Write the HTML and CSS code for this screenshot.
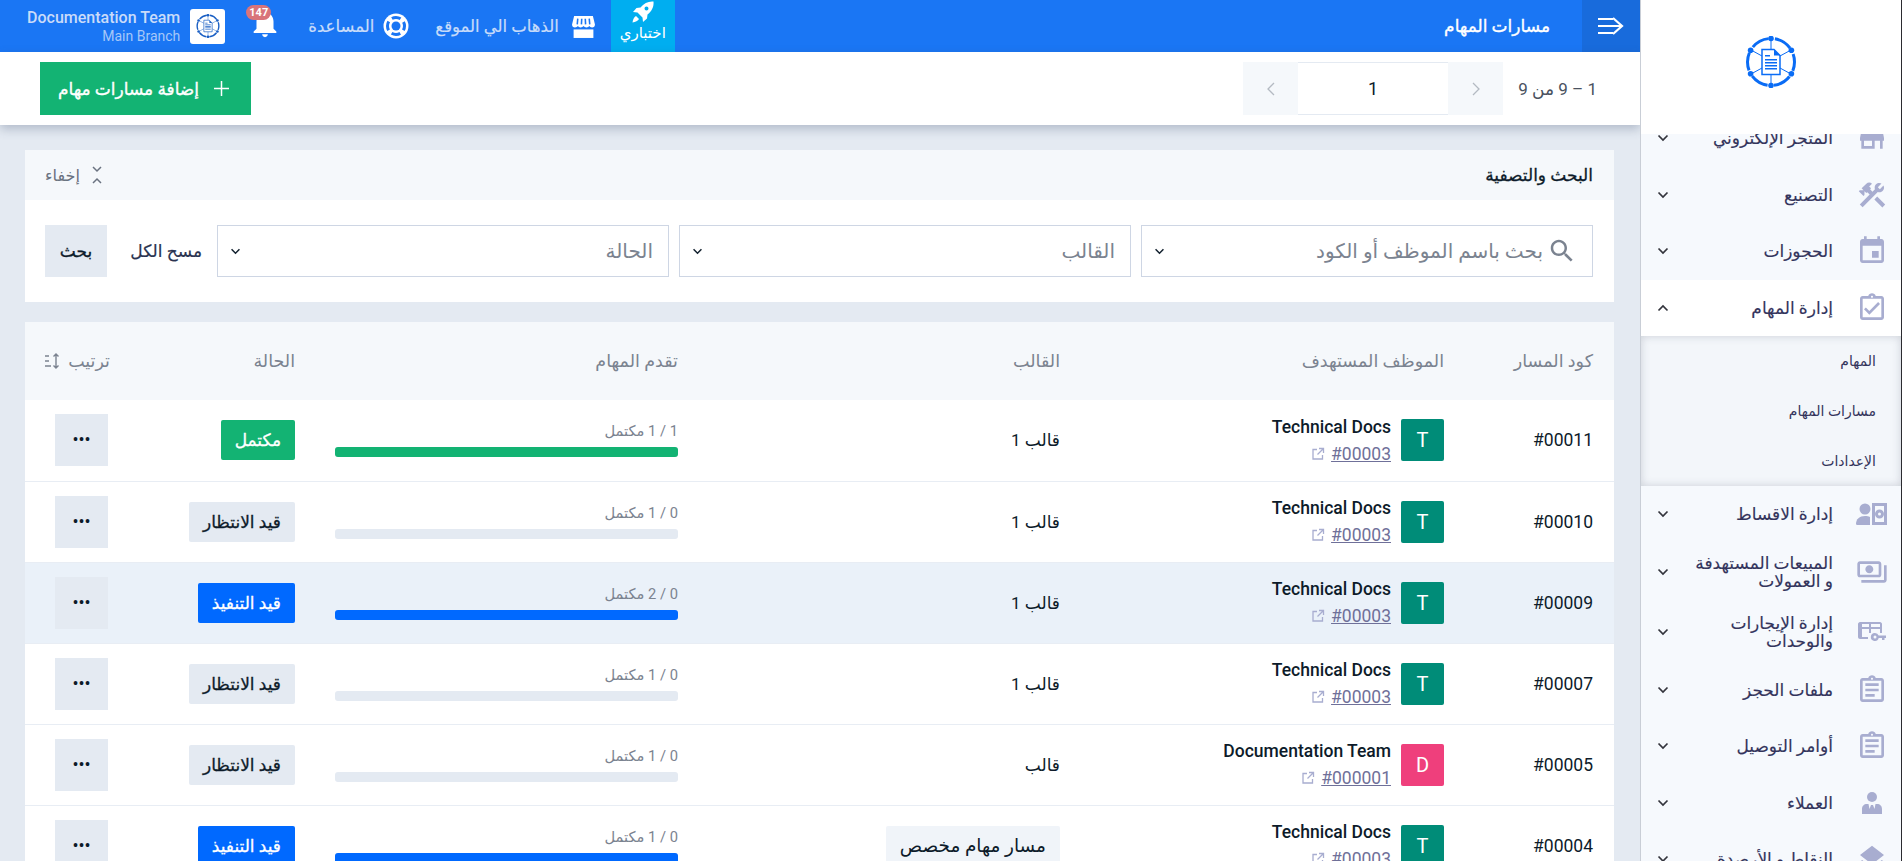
FILE: index.html
```html
<!doctype html>
<html lang="ar" dir="rtl">
	<head>
		<meta charset="UTF-8">
		<title>مسارات المهام</title>
		<link rel="stylesheet" href="styles.css">
	</head>
	<body>
		<svg class="sprite" xmlns="http://www.w3.org/2000/svg">
			<symbol id="i-logo" viewBox="0 0 52 52">
				<circle cx="26" cy="26" r="23.5" fill="none" stroke="currentColor" stroke-width="3" stroke-dasharray="18 6.61" stroke-dashoffset="9"/>
				<path d="M26 3v10M6 14l11 6M46 14l-11 6M6 38l11-6M46 38l-11-6M26 49V39" stroke="currentColor" stroke-width="1"/>
				<circle cx="26" cy="2.5" r="2.8"/><circle cx="26" cy="49.5" r="2.8"/>
				<circle cx="5.6" cy="14.2" r="2.8"/><circle cx="46.4" cy="14.2" r="2.8"/>
				<circle cx="5.6" cy="37.800" r="2.8"/><circle cx="46.4" cy="37.800" r="2.8"/>
				<path d="M17 13.500h12l6 6v19H17z" fill="#fff" stroke="currentColor" stroke-width="1.5"/>
				<path d="M29 13.500v6h6z"/>
				<path d="M20 19h5v1.400h-5zM20 23h12v1.400H20zM20 26h12v1.400H20zM20 29h12v1.400H20zM20 32h12v1.400H20z"/>
			</symbol>
			<symbol id="i-chev" viewBox="0 0 12 8"><path d="M1.500 1.500 6 6l4.500-4.500" fill="none" stroke="currentColor" stroke-width="1.700"/></symbol>
			<symbol id="i-store" viewBox="0 0 24 24"><path d="M20 4H4v2h16V4zm1 10v-2l-1-5H4l-1 5v2h1v6h10v-6h4v6h2v-6h1zm-9 4H6v-4h6v4z"/></symbol>
			<symbol id="i-shop" viewBox="0 0 24 24">
				<path d="M3 2h18l2 8c0 1.500-1 3-2.800 3-1.300 0-2-.6-2.600-1.400-.6.8-1.600 1.400-2.800 1.400s-2.200-.6-2.800-1.400c-.6.8-1.600 1.400-2.800 1.400s-2-.6-2.600-1.400C6 12.400 5.100 13 3.800 13 2 13 1 11.500 1 10z"/>
				<path d="M2.500 14.800h19V23h-19z"/>
				<path d="M6.500 4.500 6 10M10.300 4.500 10 10M13.700 4.500 14 10M17.500 4.500 18 10" stroke="#1a76f4" stroke-width="1.500" fill="none"/>
			</symbol>
			<symbol id="i-tools" viewBox="0 0 24 24"><path d="M13.780 15.300l6 6 2.110-2.160-6-6zM17.500 10c1.930 0 3.500-1.570 3.500-3.500 0-.58-.16-1.120-.41-1.600l-2.700 2.700-1.490-1.490 2.700-2.700c-.48-.25-1.020-.41-1.600-.41C15.570 3 14 4.570 14 6.500c0 .41.08.8.21 1.160l-1.850 1.850-1.780-1.780.71-.71-1.410-1.410L12 3.490c-1.170-1.170-3.070-1.170-4.240 0L4.220 7.030l1.410 1.410H2.810l-.71.71 3.540 3.540.71-.71V9.150l1.410 1.410.71-.71 1.780 1.780-7.410 7.410 2.120 2.120L16.340 9.790c.36.13.75.21 1.160.21z"/></symbol>
			<symbol id="i-event" viewBox="0 0 24 24"><path d="M17 12h-5v5h5v-5zM16 1v2H8V1H6v2H5c-1.110 0-1.990.9-1.990 2L3 19c0 1.100.89 2 2 2h14c1.100 0 2-.9 2-2V5c0-1.100-.9-2-2-2h-1V1h-2zm3 18H5V8h14v11z"/></symbol>
			<symbol id="i-task" viewBox="0 0 24 24"><path d="M18 9l-1.410-1.420L10 14.170l-2.590-2.580L6 13l4 4zm1-6h-4.180C14.400 1.840 13.300 1 12 1c-1.300 0-2.400.84-2.820 2H5c-1.100 0-2 .9-2 2v14c0 1.100.9 2 2 2h14c1.100 0 2-.9 2-2V5c0-1.100-.9-2-2-2zm-7-.25c.41 0 .75.34.75.75s-.34.75-.75.75-.75-.34-.75-.75.34-.75.75-.75zM19 19H5V5h14v14z"/></symbol>
			<symbol id="i-clip" viewBox="0 0 24 24"><path d="M7 15h7v2H7zm0-4h10v2H7zm0-4h10v2H7zm12-4h-4.180C14.400 1.840 13.300 1 12 1c-1.300 0-2.400.84-2.820 2H5c-1.100 0-2 .9-2 2v14c0 1.100.9 2 2 2h14c1.100 0 2-.9 2-2V5c0-1.100-.9-2-2-2zm-7-.25c.41 0 .75.34.75.75s-.34.75-.75.75-.75-.34-.75-.75.34-.75.75-.75zM19 19H5V5h14v14z"/></symbol>
			<symbol id="i-install" viewBox="0 -4 32 32"><circle cx="9" cy="7" r="5.500"/><path d="M0 22c0-5 3.500-8 9-8 2 0 3.500.4 5 1v8H2c-1.200 0-2-.4-2-1z"/><path fill-rule="evenodd" d="M16 1h15v22H16zm3 3v16h9V4zm4.500 3.500a4.500 4.500 0 1 1 0 9 4.500 4.500 0 0 1 0-9zm0 3a1.500 1.500 0 1 0 0 3 1.500 1.500 0 0 0 0-3z"/></symbol>
			<symbol id="i-money" viewBox="0 0 24 24"><path d="M19 14V6c0-1.100-.9-2-2-2H3c-1.100 0-2 .9-2 2v8c0 1.100.9 2 2 2h14c1.100 0 2-.9 2-2zm-2 0H3V6h14v8zm-7-7c-1.660 0-3 1.340-3 3s1.340 3 3 3 3-1.340 3-3-1.340-3-3-3zm13 0v11c0 1.100-.9 2-2 2H4v-2h17V7h2z"/></symbol>
			<symbol id="i-rent" viewBox="-2 -4 32 32"><path fill-rule="evenodd" d="M2 2h20c1 0 2 1 2 2v9h-2V9H13v4h-2V9H4v8h6v2H2c-1 0-2-1-2-2V4c0-1 1-2 2-2zm2 2v3h7V4zm9 0v3h9V4z"/><path fill-rule="evenodd" d="M17 13a4 4 0 0 1 3.700 2.500H28V18h-1.500v2H24v-2h-3.300A4 4 0 1 1 17 13zm0 2.500a1.500 1.500 0 1 0 0 3 1.500 1.500 0 0 0 0-3z"/></symbol>
			<symbol id="i-client" viewBox="-4 -4 32 32"><circle cx="12" cy="6" r="5"/><path d="M2 23v-5c0-3 2-5 5-5h1.500l1 5 1.500-4h2l1.500 4 1-5H17c3 0 5 2 5 5v5z"/></symbol>
			<symbol id="i-layers" viewBox="0 0 24 24"><path d="M11.990 18.540l-7.370-5.730L3 14.070l9 7 9-7-1.630-1.270-7.380 5.740zM12 16l7.360-5.730L21 9l-9-7-9 7 1.630 1.270L12 16z"/></symbol>
			<symbol id="i-bell" viewBox="0 0 24 24"><path d="M12 22c1.100 0 2-.9 2-2h-4c0 1.100.89 2 2 2zm6-6v-5c0-3.070-1.640-5.640-4.500-6.320V4c0-.83-.67-1.500-1.500-1.500s-1.500.67-1.500 1.500v.68C7.630 5.360 6 7.920 6 11v5l-2 2v1h16v-1l-2-2z"/></symbol>
			<symbol id="i-help" viewBox="0 0 26 26">
				<circle cx="13" cy="13" r="12.500"/>
				<circle cx="13" cy="13" r="8.500" fill="none" stroke="#1a76f4" stroke-width="3" stroke-dasharray="9 4.350" stroke-dashoffset="4.500"/>
				<circle cx="13" cy="13" r="4.500" fill="#1a76f4"/>
			</symbol>
			<symbol id="i-rocket" viewBox="0 0 24 24"><path d="M22.500 1.500c-5-.5-9.500 1.500-13 6L5.500 8 2 12l4.500.5L11.500 17.500l.5 4.500 4-3.500.5-4c4.500-3.500 6.500-8 6-13zM15.500 10.500a2 2 0 1 1 0-4 2 2 0 0 1 0 4zM5 16c-2 1-3 3.500-3.500 6.500C4.500 22 7 21 8 19z"/></symbol>
			<symbol id="i-search" viewBox="0 0 24 24"><path d="M15.500 14h-.79l-.28-.27C15.410 12.590 16 11.110 16 9.500 16 5.910 13.090 3 9.500 3S3 5.910 3 9.500 5.910 16 9.500 16c1.610 0 3.090-.59 4.230-1.570l.27.28v.79l5 4.990L20.490 19l-4.990-5zm-6 0C7.010 14 5 11.990 5 9.500S7.010 5 9.500 5 14 7.010 14 9.500 11.990 14 9.500 14z"/></symbol>
			<symbol id="i-link" viewBox="0 0 14 14"><path d="M6 2.500H2v9.500h9.500V8M8 1.500h4.500V6M12.500 1.500 6.500 7.500" fill="none" stroke="currentColor" stroke-width="1.300"/></symbol>
		</svg>

		<aside class="sidebar">
			<div class="side-logo">
				<svg class="side-logo-img"><use href="#i-logo"/></svg>
			</div>
			<ul class="side-menu">
				<li class="side-item"><svg class="side-ic"><use href="#i-store"/></svg><span class="side-txt">المتجر الإلكتروني</span><svg class="side-chev"><use href="#i-chev"/></svg></li>
				<li class="side-item"><svg class="side-ic"><use href="#i-tools"/></svg><span class="side-txt">التصنيع</span><svg class="side-chev"><use href="#i-chev"/></svg></li>
				<li class="side-item"><svg class="side-ic"><use href="#i-event"/></svg><span class="side-txt">الحجوزات</span><svg class="side-chev"><use href="#i-chev"/></svg></li>
				<li class="side-item open"><svg class="side-ic"><use href="#i-task"/></svg><span class="side-txt">إدارة المهام</span><svg class="side-chev up"><use href="#i-chev"/></svg></li>
				<li class="side-sub">
					<a>المهام</a>
					<a>مسارات المهام</a>
					<a>الإعدادات</a>
				</li>
				<li class="side-item"><svg class="side-ic"><use href="#i-install"/></svg><span class="side-txt">إدارة الاقساط</span><svg class="side-chev"><use href="#i-chev"/></svg></li>
				<li class="side-item two"><svg class="side-ic"><use href="#i-money"/></svg><span class="side-txt">المبيعات المستهدفة<br>و العمولات</span><svg class="side-chev"><use href="#i-chev"/></svg></li>
				<li class="side-item two"><svg class="side-ic"><use href="#i-rent"/></svg><span class="side-txt">إدارة الإيجارات<br>والوحدات</span><svg class="side-chev"><use href="#i-chev"/></svg></li>
				<li class="side-item"><svg class="side-ic"><use href="#i-clip"/></svg><span class="side-txt">ملفات الحجز</span><svg class="side-chev"><use href="#i-chev"/></svg></li>
				<li class="side-item"><svg class="side-ic"><use href="#i-clip"/></svg><span class="side-txt">أوامر التوصيل</span><svg class="side-chev"><use href="#i-chev"/></svg></li>
				<li class="side-item"><svg class="side-ic"><use href="#i-client"/></svg><span class="side-txt">العملاء</span><svg class="side-chev"><use href="#i-chev"/></svg></li>
				<li class="side-item"><svg class="side-ic"><use href="#i-layers"/></svg><span class="side-txt">النقاط و الأرصدة</span><svg class="side-chev"><use href="#i-chev"/></svg></li>
			</ul>
		</aside>

		<main class="main">
			<header class="topbar">
				<a class="top-toggle">
					<svg class="top-toggle-ic" viewBox="0 0 26 18"><path d="M0 2h15M0 9h23M0 16h15M15 1l9 8-9 8" fill="none" stroke="currentColor" stroke-width="2.200"/></svg>
				</a>
				<h1 class="top-title">مسارات المهام</h1>
				<div class="top-links">
					<a class="top-test"><svg class="top-test-ic"><use href="#i-rocket"/></svg><span>اختباري</span></a>
					<a class="top-link"><svg class="top-ic"><use href="#i-shop"/></svg><span>الذهاب الي الموقع</span></a>
					<a class="top-link"><svg class="top-ic help"><use href="#i-help"/></svg><span>المساعدة</span></a>
					<a class="top-bell"><svg class="top-bell-ic"><use href="#i-bell"/></svg><b class="top-badge">147</b></a>
					<div class="top-user">
						<span class="top-avatar"><svg class="top-avatar-img"><use href="#i-logo"/></svg></span>
						<div class="top-names">
							<div class="top-name">Documentation Team</div>
							<div class="top-branch">Main Branch</div>
						</div>
					</div>
				</div>
			</header>

			<div class="subbar">
				<div class="pager">
					<span class="pager-txt">1 – 9 من 9</span>
					<a class="pager-btn"><svg class="pager-ic" viewBox="0 0 8 14"><path d="M1 1l6 6-6 6" fill="none" stroke="currentColor" stroke-width="1.300"/></svg></a>
					<span class="pager-num">1</span>
					<a class="pager-btn"><svg class="pager-ic" viewBox="0 0 8 14"><path d="M7 1 1 7l6 6" fill="none" stroke="currentColor" stroke-width="1.300"/></svg></a>
				</div>
				<a class="add-btn"><svg class="add-ic" viewBox="0 0 14 14"><path d="M7 0v14M0 7h14" stroke="currentColor" stroke-width="1.400"/></svg><span>إضافة مسارات مهام</span></a>
			</div>

			<div class="content">
				<section class="filter">
					<div class="filter-head">
						<h2 class="filter-title">البحث والتصفية</h2>
						<a class="filter-hide">
							<svg class="filter-hide-ic" viewBox="0 0 10 18"><path d="M1 1l4 4 4-4M1 17l4-4 4 4" fill="none" stroke="currentColor" stroke-width="1.500"/></svg>
							<span>إخفاء</span>
						</a>
					</div>
					<div class="filter-body">
						<div class="select">
							<svg class="select-search"><use href="#i-search"/></svg>
							<span class="select-txt">بحث باسم الموظف أو الكود</span>
							<svg class="select-chev"><use href="#i-chev"/></svg>
						</div>
						<div class="select">
							<span class="select-txt">القالب</span>
							<svg class="select-chev"><use href="#i-chev"/></svg>
						</div>
						<div class="select">
							<span class="select-txt">الحالة</span>
							<svg class="select-chev"><use href="#i-chev"/></svg>
						</div>
						<a class="clear-btn">مسح الكل</a>
						<a class="search-btn">بحث</a>
					</div>
				</section>

				<section class="list">
					<table class="tracks">
						<thead>
							<tr>
								<th class="col-code">كود المسار</th>
								<th class="col-emp">الموظف المستهدف</th>
								<th class="col-tpl">القالب</th>
								<th class="col-prog">تقدم المهام</th>
								<th class="col-status">الحالة</th>
								<th class="col-act">
									<span class="sort">ترتيب
										<svg class="sort-ic" viewBox="0 0 18 16"><path d="M12 1v14M9.500 3.500 12 1l2.500 2.500M9.500 12.500 12 15l2.500-2.500M1 3h4M1 8h4M1 13h6" fill="none" stroke="currentColor" stroke-width="1.400"/></svg>
									</span>
								</th>
							</tr>
						</thead>
						<tbody>
							<tr>
								<td class="code">#00011</td>
								<td><div class="emp"><span class="avatar teal">T</span><div class="emp-info"><div class="emp-name">Technical Docs</div><a class="emp-link"><u>#00003</u><svg class="emp-ic"><use href="#i-link"/></svg></a></div></div></td>
								<td>قالب 1</td>
								<td><div class="prog-txt">1 / 1 مكتمل</div><div class="prog"><div class="prog-fill green" style="width:100%"></div></div></td>
								<td><span class="badge done">مكتمل</span></td>
								<td><a class="more">•••</a></td>
							</tr>
							<tr>
								<td class="code">#00010</td>
								<td><div class="emp"><span class="avatar teal">T</span><div class="emp-info"><div class="emp-name">Technical Docs</div><a class="emp-link"><u>#00003</u><svg class="emp-ic"><use href="#i-link"/></svg></a></div></div></td>
								<td>قالب 1</td>
								<td><div class="prog-txt">0 / 1 مكتمل</div><div class="prog"></div></td>
								<td><span class="badge wait">قيد الانتظار</span></td>
								<td><a class="more">•••</a></td>
							</tr>
							<tr class="hover">
								<td class="code">#00009</td>
								<td><div class="emp"><span class="avatar teal">T</span><div class="emp-info"><div class="emp-name">Technical Docs</div><a class="emp-link"><u>#00003</u><svg class="emp-ic"><use href="#i-link"/></svg></a></div></div></td>
								<td>قالب 1</td>
								<td><div class="prog-txt">0 / 2 مكتمل</div><div class="prog"><div class="prog-fill blue" style="width:100%"></div></div></td>
								<td><span class="badge run">قيد التنفيذ</span></td>
								<td><a class="more">•••</a></td>
							</tr>
							<tr>
								<td class="code">#00007</td>
								<td><div class="emp"><span class="avatar teal">T</span><div class="emp-info"><div class="emp-name">Technical Docs</div><a class="emp-link"><u>#00003</u><svg class="emp-ic"><use href="#i-link"/></svg></a></div></div></td>
								<td>قالب 1</td>
								<td><div class="prog-txt">0 / 1 مكتمل</div><div class="prog"></div></td>
								<td><span class="badge wait">قيد الانتظار</span></td>
								<td><a class="more">•••</a></td>
							</tr>
							<tr>
								<td class="code">#00005</td>
								<td><div class="emp"><span class="avatar pink">D</span><div class="emp-info"><div class="emp-name">Documentation Team</div><a class="emp-link"><u>#000001</u><svg class="emp-ic"><use href="#i-link"/></svg></a></div></div></td>
								<td>قالب</td>
								<td><div class="prog-txt">0 / 1 مكتمل</div><div class="prog"></div></td>
								<td><span class="badge wait">قيد الانتظار</span></td>
								<td><a class="more">•••</a></td>
							</tr>
							<tr>
								<td class="code">#00004</td>
								<td><div class="emp"><span class="avatar teal">T</span><div class="emp-info"><div class="emp-name">Technical Docs</div><a class="emp-link"><u>#00003</u><svg class="emp-ic"><use href="#i-link"/></svg></a></div></div></td>
								<td><span class="badge custom">مسار مهام مخصص</span></td>
								<td><div class="prog-txt">0 / 1 مكتمل</div><div class="prog"><div class="prog-fill blue" style="width:100%"></div></div></td>
								<td><span class="badge run">قيد التنفيذ</span></td>
								<td><a class="more">•••</a></td>
							</tr>
						</tbody>
					</table>
				</section>
			</div>
		</main>
	</body>
</html>
```
FILE: styles.css
```css
*{ margin: 0; padding: 0; box-sizing: border-box; font-family: Roboto, "Noto Sans", "DejaVu Sans", sans-serif; }
li{ list-style: none; }
html, body{ height: 100%; }
body{
	display: flex;
	overflow: hidden;
	background: #e4eaf2;
	color: #0d1b2a;
}
.sprite{ display: none; }

/* sidebar */
.sidebar{
	flex: 0 0 262px;
	height: 861px;
	overflow: hidden;
	background: #f6f9fd;
	border-left: 1px solid #c9ced6;
	border-right: 1px solid #2b2b30;
}
.side-logo{
	position: relative;
	z-index: 2;
	display: flex;
	align-items: center;
	justify-content: center;
	height: 134px;
	padding-bottom: 10px;
	background: #fff;
}
.side-logo-img{
	width: 52px;
	height: 52px;
	color: #0a6cf5;
	fill: #0a6cf5;
}
.side-menu{ margin-top: -24px; }
.side-item{
	display: flex;
	align-items: center;
	height: 56.5px;
	padding: 0 13px 0 16px;
	color: #33345c;
	font-size: 17px;
	font-weight: 500;
	line-height: 18px;
	-webkit-text-stroke: .15px #33345c;
}
.side-item.two{ height: 59.5px; }
.side-item.open{ background: #fff; }
.side-ic{
	flex: 0 0 32px;
	width: 32px;
	height: 32px;
	margin-left: 23px;
	fill: #a8add0;
}
.side-txt{ flex: 1; }
.side-chev{
	width: 12px;
	height: 8px;
	color: #33343c;
}
.side-chev.up{ transform: rotate(180deg); }
.side-sub{
	height: 150px;
	background: #f3f6fa;
	box-shadow: inset 0 0 8px rgba(60, 70, 90, .22);
}
.side-sub a{
	display: block;
	height: 50px;
	padding-right: 25px;
	color: #33345c;
	font-size: 14px;
	font-weight: 500;
	line-height: 50px;
}

/* main */
.main{
	flex: 0 0 1640px;
	height: 861px;
	overflow: hidden;
}
.topbar{
	display: flex;
	align-items: center;
	height: 52px;
	background: #1a76f4;
	color: #fff;
}
.top-toggle{
	display: flex;
	align-items: center;
	justify-content: center;
	width: 58px;
	height: 52px;
	background: #186bdc;
}
.top-toggle-ic{
	width: 26px;
	height: 18px;
}
.top-title{
	margin-right: 32px;
	font-size: 17px;
	font-weight: 500;
	-webkit-text-stroke: .35px #fff;
}
.top-links{
	display: flex;
	align-items: center;
	margin-right: auto;
	height: 52px;
	padding-left: 27px;
	color: #c8dcfa;
}
.top-test{
	display: flex;
	flex-direction: column;
	align-items: center;
	width: 64px;
	height: 52px;
	margin-left: 15px;
	background: #00aef0;
	color: #fff;
	font-size: 15px;
}
.top-test-ic{
	width: 24px;
	height: 24px;
	fill: #fff;
}
.top-link{
	display: flex;
	align-items: center;
	margin-left: 26px;
	font-size: 16.5px;
	font-weight: 500;
	-webkit-text-stroke: .2px #c8dcfa;
}
.top-ic{
	width: 25px;
	height: 25px;
	margin-left: 12px;
	fill: #fff;
}
.top-ic.help{
	width: 26px;
	height: 26px;
	margin-left: 9px;
}
.top-bell{
	position: relative;
	display: block;
	width: 34px;
	height: 34px;
	margin-bottom: 6px;
	margin-left: 23px;
}
.top-bell-ic{
	width: 34px;
	height: 34px;
	fill: #fff;
}
.top-badge{
	position: absolute;
	top: -1px;
	right: 11px;
	width: 25px;
	height: 15px;
	background: #d9747a;
	border-radius: 8px;
	color: #fff;
	font-size: 11px;
	line-height: 15px;
	text-align: center;
}
.top-user{
	display: flex;
	align-items: center;
}
.top-avatar{
	display: flex;
	align-items: center;
	justify-content: center;
	width: 35px;
	height: 35px;
	margin-left: 10px;
	background: #fff;
	border-radius: 3px;
}
.top-avatar-img{
	width: 24px;
	height: 24px;
	color: #1a5fc4;
	fill: #1a5fc4;
}
.top-names{ text-align: right; direction: ltr; }
.top-name{
	color: #c9dbf9;
	font-size: 16px;
	font-weight: 500;
	line-height: 20px;
}
.top-branch{
	color: #a6c7f8;
	font-size: 14px;
	line-height: 17px;
}

.subbar{
	position: relative;
	z-index: 1;
	display: flex;
	align-items: center;
	justify-content: space-between;
	height: 73px;
	padding: 0 43px 0 40px;
	background: #fff;
	box-shadow: 0 4px 10px rgba(60, 75, 110, .3);
}
.pager{
	display: flex;
	align-items: center;
	height: 53px;
}
.pager-txt{
	width: 94px;
	color: #4a5260;
	font-size: 17px;
}
.pager-btn{
	display: flex;
	align-items: center;
	justify-content: center;
	width: 55px;
	height: 53px;
	background: #f5f8fb;
	color: #b4bac2;
}
.pager-ic{
	width: 8px;
	height: 14px;
}
.pager-num{
	width: 150px;
	height: 53px;
	border-top: 1px solid #e4eaf2;
	border-bottom: 1px solid #e4eaf2;
	font-size: 18px;
	line-height: 51px;
	text-align: center;
}
.add-btn{
	display: flex;
	align-items: center;
	width: 211px;
	height: 53px;
	padding-right: 22px;
	background: #13b373;
	color: #fff;
	font-size: 17px;
	font-weight: 500;
	-webkit-text-stroke: .35px #fff;
}
.add-ic{
	width: 15px;
	height: 15px;
	margin-left: 15px;
}

/* filter */
.content{ padding: 25px 26px 0 25px; }
.filter{
	background: #fff;
	margin-bottom: 20px;
}
.filter-head{
	display: flex;
	align-items: center;
	justify-content: space-between;
	height: 50px;
	padding: 0 21px 0 20px;
	background: #f5f8fb;
}
.filter-title{
	font-size: 17px;
	font-weight: 500;
	-webkit-text-stroke: .3px #0d1b2a;
}
.filter-hide{
	display: flex;
	align-items: center;
	color: #6a7280;
	font-size: 16px;
}
.filter-hide-ic{
	width: 10px;
	height: 18px;
	margin-left: 12px;
}
.filter-body{
	display: flex;
	align-items: center;
	height: 102px;
	padding: 0 21px 0 20px;
}
.select{
	flex: 1;
	display: flex;
	align-items: center;
	min-width: 0;
	height: 52px;
	margin-left: 10px;
	padding: 0 15px 0 12px;
	background: #fff;
	border: 1px solid #ced6e4;
	color: #7b8390;
	font-size: 20px;
}
.select-search{
	width: 30px;
	height: 30px;
	margin-left: 4px;
	fill: #7b8390;
}
.select-txt{ flex: 1; }
.select-chev{
	width: 11px;
	height: 7px;
	color: #12202e;
}
.clear-btn{
	flex: 0 0 100px;
	padding-right: 5px;
	color: #2a3350;
	font-size: 17px;
	font-weight: 500;
	-webkit-text-stroke: .2px #2a3350;
}
.search-btn{
	flex: 0 0 62px;
	height: 52px;
	background: #e4eaf2;
	font-size: 17px;
	font-weight: 500;
	line-height: 52px;
	text-align: center;
	-webkit-text-stroke: .3px #0d1b2a;
}

/* table */
.list{ background: #fff; }
.tracks{
	width: 100%;
	table-layout: fixed;
	border-collapse: collapse;
}
.tracks th{
	height: 78px;
	background: #f5f8fb;
	color: #7b8390;
	font-size: 17.5px;
	font-weight: 400;
	text-align: right;
}
.col-code{ width: 170px; padding-right: 21px; }
.col-emp{ width: 384px; }
.col-tpl{ width: 382px; }
.col-prog{ width: 383px; }
.col-status{ width: 187px; }
.sort{
	display: flex;
	align-items: center;
	margin-right: -2px;
}
.sort-ic{
	width: 18px;
	height: 16px;
	margin-right: 6px;
}
.tracks td{
	height: 81px;
	border-bottom: 1px solid #e8edf4;
	font-size: 17px;
}
.tracks tr.hover td{ background: #eaf1f9; }
.tracks td.code{
	padding-right: 21px;
	font-size: 17.5px;
}
.emp{ display: flex; align-items: center; }
.avatar{
	width: 43px;
	height: 42px;
	margin-left: 10px;
	border-radius: 2px;
	color: #fff;
	font-size: 20px;
	line-height: 42px;
	text-align: center;
}
.avatar.teal{ background: #008c78; }
.avatar.pink{ background: #ef3f7c; }
.emp-name{
	font-size: 17.5px;
	font-weight: 500;
	line-height: 20px;
}
.emp-link{
	display: flex;
	align-items: center;
	margin-top: 7px;
	color: #6f7099;
	font-size: 17.5px;
	line-height: 20px;
}
.emp-ic{
	width: 14px;
	height: 14px;
	margin-right: 6px;
	color: #a8add0;
}
.prog-txt{
	margin-bottom: 7px;
	color: #7b8390;
	font-size: 14.7px;
	line-height: 17px;
}
.prog{
	width: 343px;
	height: 10px;
	background: #e4eaf2;
	border-radius: 3px;
}
.prog-fill{
	height: 10px;
	border-radius: 3px;
}
.prog-fill.green{ background: #13b373; }
.prog-fill.blue{ background: #0069ff; }
.badge{
	display: inline-block;
	height: 40px;
	padding: 0 14px;
	border-radius: 2px;
	font-size: 17px;
	font-weight: 500;
	line-height: 40px;
	-webkit-text-stroke: .3px currentColor;
}
.badge.done{ background: #13b373; color: #fff; }
.badge.run{ background: #0069ff; color: #fff; }
.badge.wait{ background: #e4eaf2; }
.badge.custom{
	background: #f0f4f9;
	font-size: 18.5px;
	-webkit-text-stroke: 0;
}
.more{
	display: block;
	width: 53px;
	height: 52px;
	background: #e4eaf2;
	font-size: 18px;
	line-height: 52px;
	text-align: center;
}
```
